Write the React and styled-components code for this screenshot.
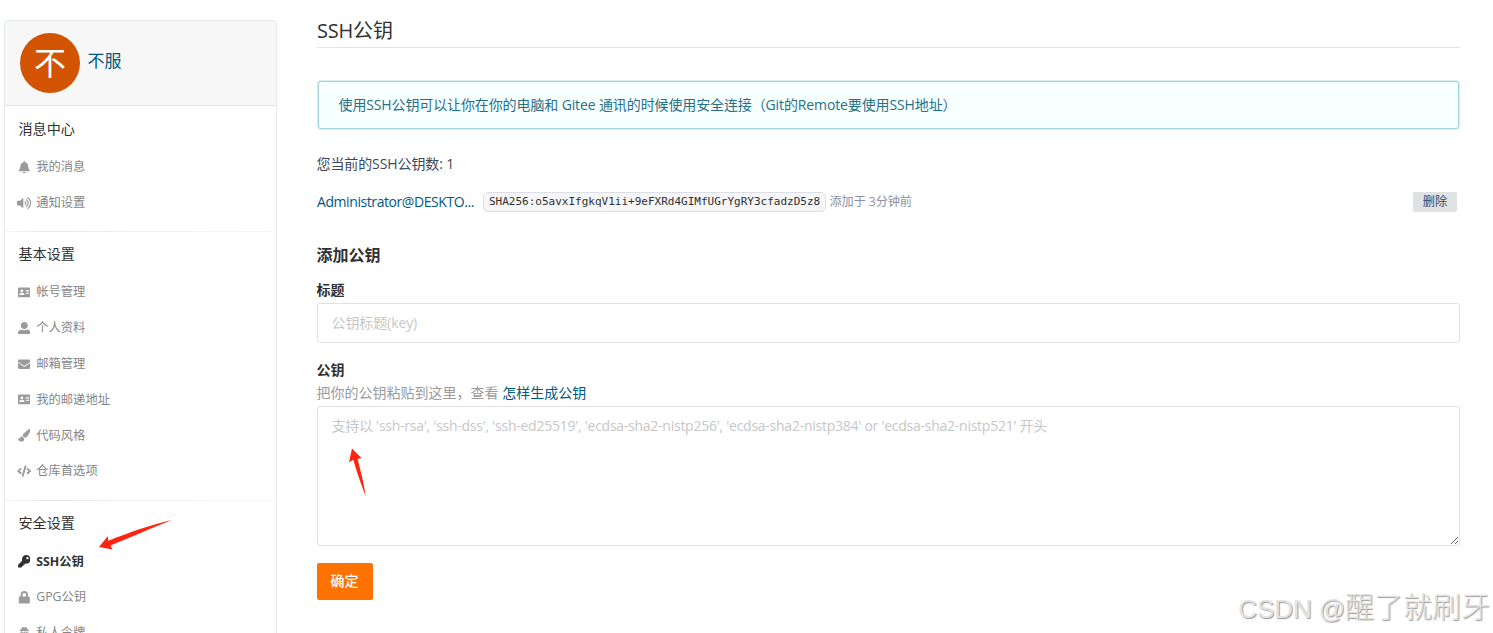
import React from 'react'
import styled, { createGlobalStyle } from 'styled-components';
import { FaBell, FaVolumeUp, FaAddressCard, FaUserAlt, FaEnvelope, FaPaintBrush, FaCode, FaKey, FaLock, FaUserSecret } from 'react-icons/fa';

const GlobalStyle = createGlobalStyle`
    * {
        box-sizing: border-box;
    }

    body {
        margin: 0;
        background: #fff;
        color: #40485b;
        font-family: "Open Sans", "Noto Sans CJK SC", sans-serif;
        font-size: 14px;
        line-height: 20px;
        overflow: hidden;
    }
`;

const Page = styled.div`
    position: relative;
    display: flex;
    align-items: flex-start;
    gap: 40px;
    height: 633px;
    padding: 0 33px 0 4px;
    overflow: hidden;
`;

const Sidebar = styled.aside`
    width: 273px;
    flex-shrink: 0;
    margin-top: 20px;
    border: 1px solid #e3e9ed;
    border-radius: 4px;
`;

const Profile = styled.div`
    display: flex;
    align-items: center;
    gap: 7.5px;
    height: 85px;
    padding: 0 15px;
    background: #f7f7f7;
    border-bottom: 1px solid #e3e6e8;
    border-radius: 3px 3px 0 0;
`;

const Avatar = styled.div`
    width: 60px;
    height: 60px;
    border-radius: 50%;
    background: #d35400;
    color: #fff;
    font-size: 32px;
    line-height: 60px;
    text-align: center;
`;

const UserName = styled.a`
    color: #005980;
    font-size: 17px;
    line-height: 24px;
    margin-bottom: 5px;
`;

const Section = styled.div`
    padding-bottom: 11.9px;
    background: linear-gradient(to right, #f6f6f6, #e6e9e9 15%, #f1f3f3 60%, #f8f8f8) bottom / 100% 1px no-repeat;

    &:nth-child(2) {
        padding-top: 0.6px;
        padding-bottom: 11.3px;
    }
`;

const SectionTitle = styled.div`
    height: 42.5px;
    padding: 0 13.5px;
    color: #303030;
    font-size: 14.1px;
    line-height: 44px;
`;

const MenuItem = styled.a`
    display: flex;
    align-items: center;
    gap: 4.7px;
    height: 35.8px;
    padding-left: 11.5px;
    color: ${props => props.$active ? "#303030" : "#868686"};
    font-size: 12.3px;
    font-weight: ${props => props.$active ? 700 : 400};
`;

const MenuIcon = styled.span`
    display: flex;
    justify-content: center;
    width: 15px;
    color: ${props => props.$active ? "#303030" : "#9b9b9b"};
    font-size: ${props => props.$wide ? 14.2 : 12.6}px;

    svg {
        flex-shrink: 0;
    }
`;

const Main = styled.main`
    flex: 1;
    min-width: 0;
`;

const Heading = styled.h1`
    height: 48px;
    margin: 0 0 33px;
    border-bottom: 1px solid #e3e3e3;
    color: #303030;
    font-size: 20px;
    font-weight: 400;
    line-height: 62px;

    span {
        font-weight: 500;
        letter-spacing: -0.2px;
    }
`;

const Message = styled.div`
    height: 48px;
    margin: 0 1px;
    padding: 0 19.5px;
    border: 1px solid #a3d4dc;
    border-radius: 3px;
    box-shadow: 0 0 0 1px #dcedf0;
    background: #f8ffff;
    color: #276f86;
    line-height: 46px;
    letter-spacing: -0.12px;
`;

const Count = styled.p`
    margin: 25px 0 18px -0.5px;
    letter-spacing: -0.1px;
`;

const KeyRow = styled.div`
    display: flex;
    align-items: center;
    height: 20px;
    padding-right: 3px;
    font-size: 12.2px;
`;

const KeyName = styled.a`
    width: 160px;
    margin-right: 6px;
    color: #005980;
    font-size: 14px;
    letter-spacing: -0.42px;
    white-space: nowrap;
`;

const Fingerprint = styled.code`
    width: 343px;
    height: 20px;
    padding-left: 5px;
    border: 1px solid #dce0e6;
    border-radius: 5px;
    background: #f6f6f8;
    color: #303030;
    font-family: "DejaVu Sans Mono", monospace;
    font-size: 11px;
    line-height: 18px;
    white-space: nowrap;
`;

const AddedAt = styled.span`
    flex: 1;
    margin-left: 3.5px;
    color: #8c92a4;
    letter-spacing: -0.1px;
`;

const DeleteButton = styled.button`
    width: 44px;
    height: 20px;
    padding: 0;
    border: 0;
    border-radius: 2px;
    background: #e0e1e2;
    color: #40485b;
    font: 12.2px/20px "Open Sans", "Noto Sans CJK SC", sans-serif;
`;

const FormTitle = styled.h3`
    margin: 31px 0 13px -0.5px;
    color: #303030;
    font-size: 16px;
    font-weight: 600;
    line-height: 24px;
`;

const Label = styled.label`
    display: block;
    height: 23px;
    margin-left: -0.5px;
    color: #303030;
    font-weight: 700;
    line-height: 20px;
`;

const Field = styled.input`
    display: block;
    width: 100%;
    height: 40px;
    margin-bottom: 17px;
    padding: 0 13.5px 2px;
    border: 1px solid #dfe1e6;
    border-radius: 3px;
    font: 14px/20px "Open Sans", "Noto Sans CJK SC", sans-serif;
    letter-spacing: -0.1px;

    &::placeholder {
        color: #c7c7c7;
    }
`;

const Hint = styled.p`
    margin: 0 0 3px -0.5px;
    color: #9b9b9b;
`;

const HintLink = styled.a`
    color: #005980;
`;

const KeyField = styled.textarea`
    display: block;
    width: 100%;
    height: 140px;
    padding: 9px 13.5px;
    border: 1px solid #dfe1e6;
    border-radius: 3px;
    font: 14px/20px "Open Sans", "Noto Sans CJK SC", sans-serif;
    letter-spacing: -0.255px;
    resize: vertical;

    &::placeholder {
        color: #c7c7c7;
    }
`;

const SubmitButton = styled.button`
    width: 56px;
    height: 37px;
    margin-top: 17px;
    padding: 0 1px 1px 0;
    border: 0;
    border-radius: 2px;
    background: #fe7300;
    color: #fff;
    font: 500 14px/36px "Open Sans", "Noto Sans CJK SC", sans-serif;
`;

const Arrow = styled.svg`
    position: absolute;
    left: ${props => props.$x}px;
    top: ${props => props.$y}px;
    fill: #ff2410;
    pointer-events: none;
`;

const Watermark = styled.div`
    position: absolute;
    right: 3px;
    bottom: 4px;
    color: #e2e2e2;
    font-family: "Liberation Sans", "Noto Sans CJK SC", sans-serif;
    font-size: 29px;
    font-weight: 300;
    line-height: 40px;
    text-shadow: 1px 1px 1px #999;
    white-space: nowrap;

    span {
        font-size: 26px;
        letter-spacing: -0.1px;
    }
`;

const sections = [
    {
        title: "消息中心",
        items: [
            { icon: FaBell, text: "我的消息" },
            { icon: FaVolumeUp, text: "通知设置", wide: true },
        ],
    },
    {
        title: "基本设置",
        items: [
            { icon: FaAddressCard, text: "帐号管理" },
            { icon: FaUserAlt, text: "个人资料" },
            { icon: FaEnvelope, text: "邮箱管理" },
            { icon: FaAddressCard, text: "我的邮递地址" },
            { icon: FaPaintBrush, text: "代码风格" },
            { icon: FaCode, text: "仓库首选项", wide: true },
        ],
    },
    {
        title: "安全设置",
        items: [
            { icon: FaKey, text: "SSH公钥", active: true },
            { icon: FaLock, text: "GPG公钥" },
            { icon: FaUserSecret, text: "私人令牌" },
        ],
    },
];

const App = () => {
  return (
    <Page>
        <GlobalStyle />
        <Sidebar>
            <Profile>
                <Avatar>不</Avatar>
                <UserName>不服</UserName>
            </Profile>
            {sections.map(section => (
                <Section key={section.title}>
                    <SectionTitle>{section.title}</SectionTitle>
                    {section.items.map(({ icon: Icon, text, active, wide }) => (
                        <MenuItem key={text} $active={active}>
                            <MenuIcon $active={active} $wide={wide}><Icon /></MenuIcon>
                            {text}
                        </MenuItem>
                    ))}
                </Section>
            ))}
        </Sidebar>
        <Main>
            <Heading><span>SSH</span>公钥</Heading>
            <Message>使用SSH公钥可以让你在你的电脑和 Gitee 通讯的时候使用安全连接（Git的Remote要使用SSH地址）</Message>
            <Count>您当前的SSH公钥数: 1</Count>
            <KeyRow>
                <KeyName>Administrator@DESKTO...</KeyName>
                <Fingerprint>SHA256:o5avxIfgkqV1ii+9eFXRd4GIMfUGrYgRY3cfadzD5z8</Fingerprint>
                <AddedAt>添加于 3分钟前</AddedAt>
                <DeleteButton>删除</DeleteButton>
            </KeyRow>
            <FormTitle>添加公钥</FormTitle>
            <Label>标题</Label>
            <Field placeholder="公钥标题(key)" />
            <Label>公钥</Label>
            <Hint>把你的公钥粘贴到这里，查看 <HintLink>怎样生成公钥</HintLink></Hint>
            <KeyField placeholder="支持以 'ssh-rsa', 'ssh-dss', 'ssh-ed25519', 'ecdsa-sha2-nistp256', 'ecdsa-sha2-nistp384' or 'ecdsa-sha2-nistp521' 开头" />
            <SubmitButton>确定</SubmitButton>
        </Main>
        <Arrow $x={98} $y={518} width="76" height="34">
            <path d="M1 29 L9.7 18.3 L10.3 22.8 C30 15 52 7 74 2 C54 10 35 18 12.5 27.6 L14.5 31.5 Z" />
        </Arrow>
        <Arrow $x={348} $y={447} width="20" height="51">
            <path d="M4 1.5 L13.7 11.3 L9.5 11.7 C12.5 23 16 37 17.8 49.5 C13 37 8.5 24 5.3 12.7 L1 15.3 Z" />
        </Arrow>
        <Watermark><span>CSDN @</span>醒了就刷牙</Watermark>
    </Page>
  )
}

export default App;
